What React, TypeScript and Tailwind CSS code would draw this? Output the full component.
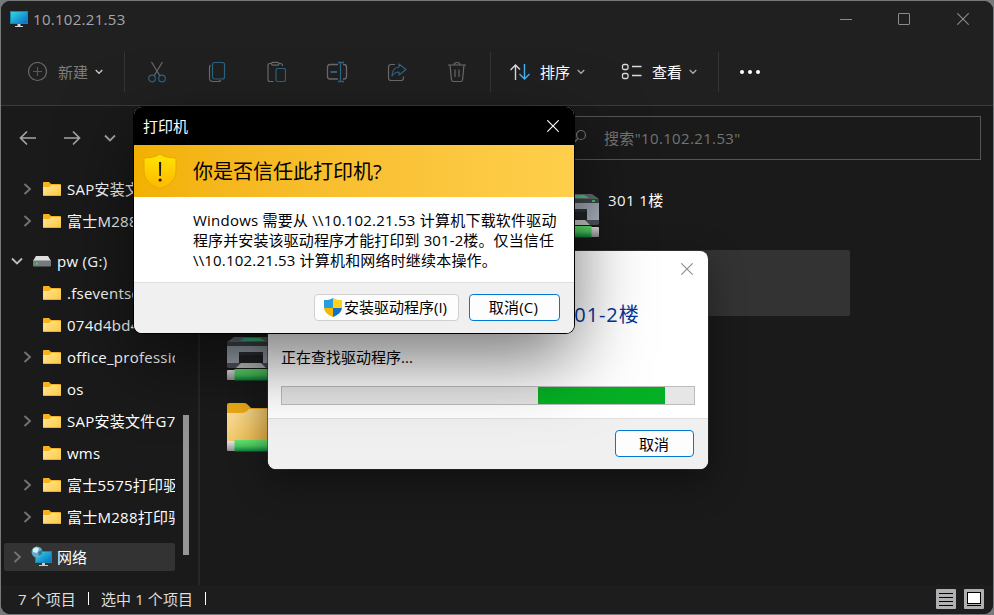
import React from "react";

const folders = [
  { name: "SAP安装文件G7", arrow: true },
  { name: "富士M288打印驱动", arrow: true },
];
const driveFolders = [
  { name: ".fseventsd", arrow: false },
  { name: "074d4bd4a", arrow: false },
  { name: "office_professional", arrow: true },
  { name: "os", arrow: false },
  { name: "SAP安装文件G7", arrow: true },
  { name: "wms", arrow: false },
  { name: "富士5575打印驱动", arrow: true },
  { name: "富士M288打印驱动", arrow: true },
];

function Chevron({ down = false, className = "" }: { down?: boolean; className?: string }) {
  return (
    <svg width="12" height="12" viewBox="0 0 12 12" fill="none" stroke="currentColor" strokeWidth="1.8" className={className}>
      <path d={down ? "M1 3.5 6 8.5 11 3.5" : "M2.5 1 8 6 2.5 11"} />
    </svg>
  );
}

function SmallChevron({ className = "" }: { className?: string }) {
  return (
    <svg width="8" height="6" viewBox="0 0 8 6" fill="none" stroke="currentColor" strokeWidth="1.3" className={className}>
      <path d="M.7 1 4 4.3 7.3 1" />
    </svg>
  );
}

function FolderIcon() {
  return (
    <svg width="18" height="14" viewBox="0 0 18 14" className="shrink-0">
      <defs>
        <linearGradient id="fold" x1="0" y1="0" x2="1" y2="1">
          <stop offset="0" stopColor="#ffe69c" />
          <stop offset="1" stopColor="#ffc83c" />
        </linearGradient>
      </defs>
      <path d="M0 1Q0 0 1 0H6L8 2H17Q18 2 18 3V13H0Z" fill="#f8b31c" />
      <path d="M0 5H6.5L8 3H18V13Q18 14 17 14H1Q0 14 0 13Z" fill="url(#fold)" />
      <path d="M.5 13.6H17.5" stroke="#e8a51c" strokeWidth=".8" />
    </svg>
  );
}

function TreeRow({ name, arrow }: { name: string; arrow: boolean }) {
  return (
    <div className="flex h-8 w-[171px] items-center overflow-hidden whitespace-nowrap pl-[18px]">
      <span className="w-[21px] shrink-0 text-[#757575]">{arrow && <Chevron />}</span>
      <FolderIcon />
      <span className="ml-[6px] tracking-[0.25px] text-white">{name}</span>
    </div>
  );
}

function MonitorIcon() {
  return (
    <svg width="18" height="17" viewBox="0 0 18 17">
      <defs>
        <linearGradient id="mon" x1="0" y1="0" x2="1" y2="1">
          <stop offset="0" stopColor="#34dbe4" />
          <stop offset="1" stopColor="#0869c4" />
        </linearGradient>
      </defs>
      <rect x=".5" y=".5" width="17" height="12" fill="url(#mon)" stroke="#1787ad" />
      <path d="M7.5 13H10.500V15H13V16H5V15H7.500Z" fill="#cdd5da" />
    </svg>
  );
}

function Cable() {
  return (
    <g>
      <rect x="0" y="35" width="48" height="10" rx="1" fill="url(#plug)" />
      <rect x="7.500" y="34" width="33" height="11.500" fill="url(#cable)" />
    </g>
  );
}

function IconDefs() {
  return (
    <defs>
      <linearGradient id="cable" x1="0" y1="0" x2="0" y2="1">
        <stop offset="0" stopColor="#62e66f" />
        <stop offset=".5" stopColor="#4cc95d" />
        <stop offset="1" stopColor="#087d3b" />
      </linearGradient>
      <linearGradient id="plug" x1="0" y1="0" x2="0" y2="1">
        <stop offset="0" stopColor="#e8e8e8" />
        <stop offset="1" stopColor="#909090" />
      </linearGradient>
      <linearGradient id="body" x1="0" y1="0" x2="1" y2="1">
        <stop offset="0" stopColor="#929ba6" />
        <stop offset="1" stopColor="#b5bbc7" />
      </linearGradient>
      <linearGradient id="glass" x1="0" y1="0" x2="1" y2="0">
        <stop offset="0" stopColor="#2fb3ad" />
        <stop offset="1" stopColor="#4bd865" />
      </linearGradient>
      <linearGradient id="bigfold" x1="0" y1="0" x2="1" y2="1">
        <stop offset="0" stopColor="#ffe7a3" />
        <stop offset="1" stopColor="#e5a832" />
      </linearGradient>
    </defs>
  );
}

function PrinterIcon() {
  return (
    <svg width="48" height="48" viewBox="0 0 48 48" className="shrink-0">
      <IconDefs />
      <path d="M7 2H41L48 7V11H0V7Z" fill="#656a71" />
      <path d="M0 7H48V11H0Z" fill="#41454b" />
      <path d="M17 3H33L38 6H13Z" fill="url(#glass)" />
      <rect x="41" y="8" width="3" height="2" fill="#2fd05a" />
      <path d="M0 11H48V31Q48 32 47 32H1Q0 32 0 31Z" fill="url(#body)" />
      <path d="M0 28H48V31Q48 33 46 33H2Q0 33 0 31Z" fill="#51565d" />
      <path d="M12 17H36V28H12Z" fill="#222428" />
      <path d="M12 17H36V20H12Z" fill="#303237" />
      <path d="M14 28H34L39 33H9Z" fill="#c8c8c9" />
      <Cable />
    </svg>
  );
}

function NetFolderIcon() {
  return (
    <svg width="48" height="51" viewBox="0 0 48 51">
      <IconDefs />
      <path d="M0 2Q0 0 2 0H17Q19 0 20 1L24 5H46Q48 5 48 7V43H0Z" fill="#efac18" />
      <path d="M0 10H15Q18 10 20 8L22 6H48V42H0Z" fill="url(#bigfold)" />
      <g transform="translate(0 3)"><Cable /></g>
    </svg>
  );
}

function WarningShield() {
  return (
    <svg width="34" height="37" viewBox="0 0 34 37">
      <defs>
        <linearGradient id="warn" x1="0" y1="0" x2="0" y2="1">
          <stop offset="0" stopColor="#ffe500" />
          <stop offset="1" stopColor="#ffb600" />
        </linearGradient>
      </defs>
      <path d="M17 1C13 4 7 5 1 5V17C1 27 8 33 17 36C26 33 33 27 33 17V5C27 5 21 4 17 1Z" fill="url(#warn)" stroke="#e9a800" strokeWidth="1" />
      <path d="M16 9H18.200L17.900 23H16.300Z" fill="#1c1a10" />
      <circle cx="17.100" cy="27" r="1.600" fill="#1c1a10" />
    </svg>
  );
}

function UacShield() {
  return (
    <svg width="18" height="19" viewBox="0 0 18 19">
      <defs>
        <clipPath id="uac"><path d="M9 0C6.500 1.700 3.500 2 0 2V9C0 14 4 17 9 19C14 17 18 14 18 9V2C14.500 2 11.500 1.700 9 0Z" /></clipPath>
      </defs>
      <g clipPath="url(#uac)">
        <rect width="9" height="10" fill="#279edb" />
        <rect x="9" width="9" height="10" fill="#ffd21a" />
        <rect y="10" width="9" height="9" fill="#f4b800" />
        <rect x="9" y="10" width="9" height="9" fill="#1273c5" />
      </g>
    </svg>
  );
}

function Close({ className = "" }: { className?: string }) {
  return (
    <svg width="12" height="12" viewBox="0 0 12 12" stroke="currentColor" strokeWidth="1.100" className={className}>
      <path d="M.3.3 11.700 11.700M11.700.3.3 11.700" />
    </svg>
  );
}

function Toolbar() {
  const g = "#6b6b6b";
  const b = "#2c6485";
  return (
    <div className="flex h-[68px] items-center pl-[26px] pt-[2px]">
      <svg width="20" height="20" viewBox="0 0 20 20" fill="none" strokeWidth="1.200">
        <circle cx="10.500" cy="9.500" r="9" stroke={g} /><path d="M10.500 5V14M6 9.500H15" stroke={b} />
      </svg>
      <span className="ml-[11px] w-[30px] text-[#7d7d7d]">新建</span>
      <SmallChevron className="ml-[7px] text-[#c8c8c8]" />
      <div className="ml-[21px] h-10 w-px bg-[#353535]" />
      <div className="ml-[22px] flex w-[320px] justify-between">
        <svg width="20" height="22" viewBox="0 0 20 22" fill="none" strokeWidth="1.200">
          <path d="M4.500 1 13 15M15.500 1 7 15" stroke={g} /><circle cx="5" cy="17.500" r="3.300" stroke={b} /><circle cx="15" cy="17.500" r="3.300" stroke={b} />
        </svg>
        <svg width="20" height="22" viewBox="-1 0 20 22" fill="none" strokeWidth="1.200">
          <path d="M2.500 4Q1.500 5 1.500 6.500V17Q1.500 20.500 5 20.500H10Q12 20.500 13 19.500" stroke={g} /><rect x="4.500" y="1.500" width="12" height="16.500" rx="2" stroke={b} />
        </svg>
        <svg width="20" height="22" viewBox="-.5 0 20 22" fill="none" strokeWidth="1.200">
          <path d="M7 20.500H3.500Q1.500 20.500 1.500 18.500V4.500Q1.500 2.500 3.500 2.500H5M12 2.500H14Q16 2.500 16 5" stroke={g} /><rect x="5" y="1.300" width="7.500" height="2.800" rx="1.400" stroke={g} /><rect x="9.500" y="7.500" width="9.500" height="13" rx="1.500" stroke={b} />
        </svg>
        <svg width="22" height="22" viewBox="0 0 22 22" fill="none" strokeWidth="1.300">
          <path d="M12 3.500H4Q1.500 3.500 1.500 6V15.500Q1.500 18 4 18H12M17 3.500H18Q20.500 3.500 20.500 6V15.500Q20.500 18 18 18H17" stroke={g} /><path d="M4.500 11H11" stroke={b} strokeWidth="2" /><path d="M12 1.500H18M14.500 1.500V20.500M12 20.500H18" stroke={b} />
        </svg>
        <svg width="20" height="22" viewBox="0 0 20 22" fill="none" strokeWidth="1.200">
          <path d="M8 3.500H4Q1.500 3.500 1.500 6V17Q1.500 19.500 4 19.500H14Q16.500 19.500 16.500 17V15.500" stroke={g} /><path d="M12 3 19 8.500 12 14V11Q7.500 11 5 15Q5 7 12 6Z" stroke={b} strokeLinejoin="round" />
        </svg>
        <svg width="20" height="22" viewBox="0 0 20 22" fill="none" stroke={g} strokeWidth="1.200">
          <path d="M1 4H19M7 4Q7 1.500 10 1.500Q13 1.500 13 4M3 4 4.500 19Q4.700 20.500 6.200 20.500H13.800Q15.300 20.500 15.500 19L17 4M8 8.500V16M12 8.500V16" />
        </svg>
      </div>
      <div className="ml-[23px] h-10 w-px bg-[#353535]" />
      <svg width="20" height="18" viewBox="0 0 20 18" fill="none" strokeWidth="1.400" className="ml-[19px]">
        <path d="M5.500 17V2M.500 7 5.500 2 10 6.500" stroke="#dadada" /><path d="M14.500 1V16M9.500 11 14.500 16 19.500 11" stroke="#45b5f5" />
      </svg>
      <span className="ml-[10px] w-[30px] text-white">排序</span>
      <SmallChevron className="ml-[7px] text-[#aaa]" />
      <svg width="21" height="18" viewBox="0 0 21 18" fill="none" stroke="#dadada" strokeWidth="1.300" className="ml-[36px]">
        <rect x="1.500" y="1.500" width="5.500" height="5" rx="1.500" /><rect x="1.500" y="10.500" width="5.500" height="5" rx="1.500" /><path d="M11 3.500H20.500M11 12.500H20.500" />
      </svg>
      <span className="ml-[10px] w-[30px] text-white">查看</span>
      <SmallChevron className="ml-[7px] text-[#aaa]" />
      <div className="ml-[21px] h-10 w-px bg-[#353535]" />
      <div className="ml-[21px] flex gap-1">
        <i className="size-1 rounded-full bg-white" /><i className="size-1 rounded-full bg-white" /><i className="size-1 rounded-full bg-white" />
      </div>
    </div>
  );
}

function Explorer() {
  return (
    <div className="flex h-[613px] w-[992px] flex-col overflow-hidden rounded-[9px] bg-[#1a1a1a]">
      <div className="h-[104px] shrink-0 bg-[#202020]">
        <div className="flex h-9 items-center pl-[9px] pr-6">
          <MonitorIcon />
          <span className="ml-[5px] tracking-[0.3px] text-[#a6a6a6]">10.102.21.53</span>
          <div className="ml-auto flex items-center text-[#8b8b8b]">
            <div className="h-px w-3 bg-current" />
            <div className="ml-[46px] size-3 rounded-[1px] border border-current" />
            <Close className="ml-[47px]" />
          </div>
        </div>
        <Toolbar />
      </div>
      <div className="h-px shrink-0 bg-[#3a3a3a]" />
      <div className="flex h-[66px] shrink-0 pt-[10px]">
        <div className="flex h-11 w-[560px] items-center pl-[18px] text-[#a5a5a5]">
          <svg width="18" height="16" viewBox="0 0 18 16" fill="none" stroke="currentColor" strokeWidth="1.700"><path d="M17 8H2M8 1.500 1.500 8 8 14.500" /></svg>
          <svg width="18" height="16" viewBox="0 0 18 16" fill="none" stroke="currentColor" strokeWidth="1.700" className="ml-[26px]"><path d="M1 8H16M10 1.500 16.500 8 10 14.500" /></svg>
          <Chevron down className="ml-[23px] -mt-px" />
        </div>
        <div className="flex h-11 w-[420px] items-center border border-[#555] pl-[10px] text-[#747474]">
          <svg width="16" height="14" viewBox="0 0 16 14" fill="none" stroke="currentColor" strokeWidth="1.200" className="-mt-1"><circle cx="9" cy="6" r="4.500" /><path d="M6 9.500 2 13.500" /></svg>
          <span className="ml-[16px] tracking-[0.35px]">搜索"10.102.21.53"</span>
        </div>
      </div>
      <div className="flex min-h-0 flex-1">
        <div className="flex w-[197px] shrink-0 justify-between pl-[3px]">
          <div className="pt-px">
            {folders.map((f) => <TreeRow key={f.name} {...f} />)}
            <div className="mt-2 flex h-8 items-center pl-[7px] text-[#bdbdbd]">
              <Chevron down />
              <svg width="18" height="11" viewBox="0 0 18 11" className="ml-[10px]">
                <path d="M3 0H15L18 5H0Z" fill="#dedede" /><rect y="4.500" width="18" height="6" rx="1" fill="#757b7f" /><rect x="3" y="6.500" width="2" height="2" fill="#34d64b" />
              </svg>
              <span className="ml-[6px] tracking-[0.3px] text-white">pw (G:)</span>
            </div>
            {driveFolders.map((f) => <TreeRow key={f.name} {...f} />)}
            <div className="mt-[10px] flex h-7 w-[171px] items-center rounded-[2px] bg-[#333] pl-[8px]">
              <Chevron className="text-[#757575]" />
              <svg width="21" height="21" viewBox="0 0 21 21" className="-mt-px ml-[7px]">
                <rect x="4.500" y="5.500" width="16" height="11" fill="url(#mon)" stroke="#1787ad" />
                <path d="M11 17H14V19H17V20H8V19H11Z" fill="#c9d0d4" />
                <circle cx="6" cy="6" r="5.500" fill="#65abc9" /><path d="M2 3Q6-.5 8 3L6 7 2 6Z" fill="#d7f0f3" /><path d="M7 6 11 4V8L8 10Z" fill="#2f789f" />
              </svg>
              <span className="ml-[5px] text-white">网络</span>
            </div>
          </div>
          <div className="mr-[9px] mt-[243px] h-[140px] w-[6px] bg-[#969696]" />
        </div>
        <div className="w-[2px] bg-[#272727]" />
        <div className="ml-[17px] mt-[7px] grid h-[278px] grid-cols-[308px_309px] grid-rows-4 gap-x-4 gap-y-[5px] text-white">
          <div className="pl-[10px] pt-[13px]"><PrinterIcon /></div>
          <div className="flex pl-[10px] pt-[13px]"><PrinterIcon /><span className="ml-[9px] -mt-[2px] leading-5 tracking-[0.4px]">301 1楼</span></div>
          <div className="pl-[10px] pt-[13px]"><PrinterIcon /></div>
          <div className="rounded-[2px] bg-[#333] pl-[10px] pt-[13px]"><PrinterIcon /></div>
          <div className="pl-[10px] pt-[14px]"><PrinterIcon /></div>
          <div />
          <div className="pl-[10px] pt-[12px]"><NetFolderIcon /></div>
          <div />
        </div>
      </div>
      <div className="flex h-[29px] shrink-0 items-center bg-[#1d1d1d] pb-[2px] pl-[17px] pr-[9px] text-[#dedede]">
        <span className="tracking-[0.1px]">7 个项目</span>
        <i className="ml-[12px] h-[13px] w-px bg-white" />
        <span className="ml-[12px] tracking-[0.1px]">选中 1 个项目</span>
        <i className="ml-[12px] h-[13px] w-px bg-white" />
        <div className="ml-auto flex gap-2">
          <svg width="20" height="20"><rect width="20" height="20" rx="1" fill="#b0afb1" /><path d="M3 4.500H17M3 8.500H17M3 12.500H17M3 16.500H17" stroke="#000" /></svg>
          <svg width="20" height="20"><rect width="20" height="20" rx="1" fill="#b0afb1" /><rect x="3.500" y="3.500" width="13" height="11" fill="#fff" stroke="#000" /><path d="M3 16.500H17" stroke="#000" /></svg>
        </div>
      </div>
    </div>
  );
}

function ProgressDialog() {
  return (
    <div className="absolute left-[268px] top-[251px] flex h-[218px] w-[440px] flex-col overflow-hidden rounded-[8px] bg-white text-black shadow-[0_12px_36px_rgba(0,0,0,0.4),0_0_0_1px_rgba(60,60,60,0.6)]">
      <div className="h-[168px] border-b border-[#dfdfdf] px-[13px]">
        <div className="flex justify-end pr-[2px] pt-3"><Close className="text-[#8b8b8b]" /></div>
        <div className="mt-[25px] pl-[281px] text-[20px] leading-[30px] tracking-[0.9px] text-[#003399]">301-2楼</div>
        <div className="mt-[17px] leading-5">正在查找驱动程序...</div>
        <div className="mt-[19px] flex h-[19px] border border-[#bcbcbc] bg-[#e6e6e6]">
          <div className="ml-[256px] w-[127px] bg-[#06b025]" />
        </div>
      </div>
      <div className="flex flex-1 items-center justify-end bg-[#f0f0f0] pb-px pr-[14px]">
        <div className="flex h-[27px] w-[79px] items-center justify-center rounded-[4px] border border-[#0078d4] bg-[#fdfdfd] pr-px">取消</div>
      </div>
    </div>
  );
}

function TrustDialog() {
  return (
    <div className="absolute left-[134px] top-[107px] flex h-[226px] w-[440px] flex-col overflow-hidden rounded-[8px] bg-white text-black shadow-[0_0_0_1px_#000,0_26px_72px_rgba(0,0,0,0.55)]">
      <div className="flex h-[38px] items-center justify-between bg-black pl-[9px] pr-[15px] text-white"><span>打印机</span><Close /></div>
      <div className="flex h-[52px] items-center bg-linear-to-r from-[#f2b100] to-[#ffcf4b] pl-[9px]">
        <WarningShield />
        <span className="ml-[16px] pt-px text-[20px] leading-6">你是否信任此打印机<span className="font-['Open_Sans']">?</span></span>
      </div>
      <div className="h-[86px] whitespace-nowrap border-b border-[#dfdfdf] pl-[59px] pt-[13px] leading-5">
        <div className="tracking-[0.23px]">Windows 需要从 \\10.102.21.53 计算机下载软件驱动</div>
        <div className="tracking-[0.11px]">程序并安装该驱动程序才能打印到 301-2楼。仅当信任</div>
        <div className="tracking-[0.18px]">\\10.102.21.53 计算机和网络时继续本操作。</div>
      </div>
      <div className="flex flex-1 items-center justify-end gap-[10px] bg-[#f0f0f0] pb-px pr-[14px]">
        <div className="flex h-[27px] w-[145px] items-center justify-center gap-[2px] rounded-[4px] border border-[#d0d0d0] bg-[#fdfdfd] pb-px pr-[2px]"><UacShield /><span>安装驱动程序(I)</span></div>
        <div className="flex h-[27px] w-[91px] items-center justify-center rounded-[4px] border border-[#0078d4] bg-[#fdfdfd] pb-px pr-[2px] tracking-[0.2px]">取消(C)</div>
      </div>
    </div>
  );
}

export default function App() {
  return (
    <div className="relative h-[615px] w-[994px] overflow-hidden bg-[#777a7b] pl-px pt-px font-['Open_Sans','Noto_Sans_CJK_SC',sans-serif] text-[15px] leading-5">
      <Explorer />
      <ProgressDialog />
      <TrustDialog />
    </div>
  );
}
